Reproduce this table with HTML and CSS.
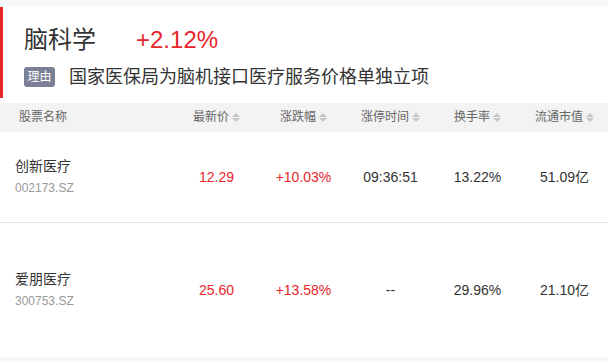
FILE: index.html
```html
<!DOCTYPE html>
<html lang="zh-CN">
<head>
<meta charset="utf-8">
<link rel="stylesheet" href="styles.css">
</head>
<body>
<div class="page">
  <div class="topstrip"></div>
  <section class="card">
    <div class="title-row">
      <span class="title">脑科学</span>
      <span class="pct">+2.12%</span>
    </div>
    <div class="reason-row">
      <span class="tag">理由</span>
      <span class="reason">国家医保局为脑机接口医疗服务价格单独立项</span>
    </div>
  </section>
  <div class="table">
    <div class="thead">
      <div class="th th-name">股票名称</div>
      <div class="th">最新价<span class="sort"><i class="up"></i><i class="down"></i></span></div>
      <div class="th">涨跌幅<span class="sort"><i class="up"></i><i class="down"></i></span></div>
      <div class="th">涨停时间<span class="sort"><i class="up"></i><i class="down"></i></span></div>
      <div class="th">换手率<span class="sort"><i class="up"></i><i class="down"></i></span></div>
      <div class="th">流通市值<span class="sort"><i class="up"></i><i class="down"></i></span></div>
    </div>
    <div class="tr tr1">
      <div class="td td-name"><div class="sname">创新医疗</div><div class="scode">002173.SZ</div></div>
      <div class="td red">12.29</div>
      <div class="td red">+10.03%</div>
      <div class="td">09:36:51</div>
      <div class="td">13.22%</div>
      <div class="td">51.09亿</div>
    </div>
    <div class="tr tr2">
      <div class="td td-name"><div class="sname">爱朋医疗</div><div class="scode">300753.SZ</div></div>
      <div class="td red">25.60</div>
      <div class="td red">+13.58%</div>
      <div class="td">--</div>
      <div class="td">29.96%</div>
      <div class="td">21.10亿</div>
    </div>
  </div>
  <div class="bottomstrip"></div>
</div>
</body>
</html>
```
FILE: styles.css
```css
html, body {
  margin: 0;
  padding: 0;
  background: #ffffff;
}
body {
  font-family: "Liberation Sans", "Noto Sans CJK SC", sans-serif;
  color: #333333;
  width: 608px;
  height: 362px;
  overflow: hidden;
}
.page {
  display: flex;
  flex-direction: column;
}
.topstrip {
  height: 7px;
  background: #f7f8fa;
}
.card {
  border-left: 3px solid #e8252a;
  padding: 18px 0 11px 21px;
  display: flex;
  flex-direction: column;
  gap: 12px;
  margin-bottom: 5px;
}
.title-row {
  display: flex;
  align-items: center;
  height: 30px;
  gap: 40px;
}
.title {
  font-size: 24px;
  line-height: 30px;
  color: #333333;
}
.pct {
  font-size: 24px;
  line-height: 30px;
  color: #e8252a;
}
.reason-row {
  display: flex;
  align-items: center;
  height: 20px;
  gap: 14px;
}
.tag {
  display: inline-flex;
  align-items: center;
  justify-content: center;
  width: 31px;
  height: 20px;
  border-radius: 3px;
  background: #7b8096;
  color: #ffffff;
  font-size: 12px;
  line-height: 20px;
}
.reason {
  font-size: 18px;
  line-height: 20px;
  color: #333333;
}
.table {
  display: flex;
  flex-direction: column;
}
.thead, .tr {
  display: grid;
  grid-template-columns: 173px repeat(5, 87px);
  align-items: center;
}
.thead {
  height: 29px;
  background: #f3f3f3;
}
.th {
  font-size: 12px;
  line-height: 29px;
  color: #666666;
  display: flex;
  align-items: center;
  justify-content: center;
}
.th-name {
  justify-content: flex-start;
  padding-left: 19px;
}
.sort {
  display: inline-flex;
  flex-direction: column;
  gap: 1px;
  margin-left: 3px;
}
.sort i {
  display: block;
  width: 0;
  height: 0;
  border-left: 4px solid transparent;
  border-right: 4px solid transparent;
}
.sort .up {
  border-bottom: 4px solid #c6c6c6;
}
.sort .down {
  border-top: 4px solid #c6c6c6;
}
.tr1 {
  height: 90px;
  border-bottom: 1px solid #e8e8e8;
}
.tr2 {
  height: 134px;
}
.td {
  font-size: 14px;
  line-height: 20px;
  text-align: center;
  color: #333333;
}
.td.red {
  color: #e8252a;
}
.td-name {
  text-align: left;
  padding-left: 15px;
}
.sname {
  font-size: 14px;
  line-height: 20px;
  color: #333333;
}
.scode {
  margin-top: 2px;
  font-size: 12px;
  line-height: 20px;
  color: #999999;
}
.bottomstrip {
  height: 6px;
  background: #f8f8fa;
}
```
